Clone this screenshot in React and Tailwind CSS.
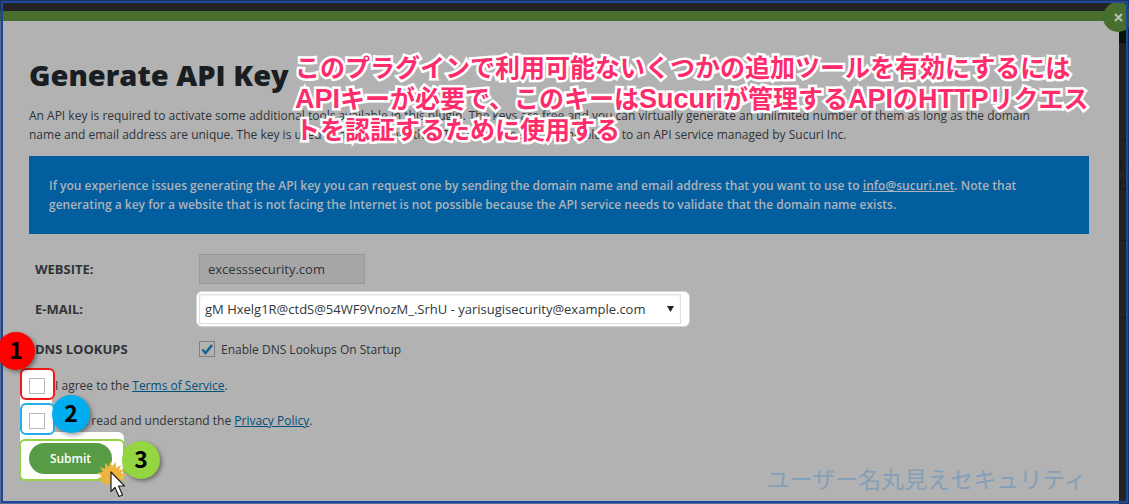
import clsx from "clsx";

const emails = [
  "gM Hxelg1R@ctdS@54WF9VnozM_.SrhU - yarisugisecurity@example.com",
];

function StepBadge({ number, className }) {
  return (
    <span
      className={clsx(
        "absolute z-30 flex size-[38px] items-center justify-center rounded-full pb-1 font-['Noto_Sans_CJK_JP',sans-serif] text-[23px] font-bold leading-none text-black shadow-[2px_2px_4px_rgba(0,0,0,0.4)]",
        className
      )}
    >
      {number}
    </span>
  );
}

function AgreementRow({ id, text, link, frame, children }) {
  return (
    <div className="relative flex h-[35px] items-center">
      <span
        className={clsx(
          "absolute -left-[9px] top-0 z-10 h-8 w-[35px] rounded-md border-2 bg-white",
          frame
        )}
      />
      <input
        id={id}
        type="checkbox"
        className="z-20 size-4 appearance-none border border-[#b4b9be] bg-white"
      />
      <label htmlFor={id} className="ml-2.5">
        {text}{" "}
        <a href="#" className="text-[#00507a] underline">
          {link}
        </a>
        .
      </label>
      {children}
    </div>
  );
}

function ClickCursor() {
  return (
    <svg
      className="absolute left-[68px] top-[18px] z-30"
      width="32"
      height="38"
      viewBox="0 0 32 38"
      aria-hidden="true"
    >
      <path
        d="M13 0l2 5 4-4 0 6 5-3-2 5 6-1-4 4 6 2-6 2 4 4-6-1 1 5-5-3-1 5-4-4-3 4-1-5-5 2 2-5-6 0 5-3-5-3 6-1-3-5 5 2 0-6 4 4z"
        fill="#f0b43c"
      />
      <path
        d="M14 11V30.500L18 26.500L22 35.500L25.500 34L21.500 25H27.500z"
        fill="#fff"
        stroke="#222"
        strokeWidth="1.2"
        strokeLinejoin="round"
      />
    </svg>
  );
}

function Latin({ children }) {
  return <span className="text-[27px]">{children}</span>;
}

export default function App() {
  return (
    <div className="relative flex min-h-screen flex-col overflow-hidden bg-[#232323] font-['Open_Sans',sans-serif] text-[12px] leading-[19px] text-[#303336]">
      <div className="h-[11px]" />

      <div className="flex flex-1">
        <main className="flex-1 border-t-10 border-[#476e2d] bg-[#b2b2b2] pl-[29px] pr-[30px] pt-9">
          <h1 className="text-[29px] font-extrabold leading-9 text-[#191e23]">
            Generate API Key
          </h1>

          <p className="mt-[13px]">
            An API key is required to activate some additional tools available
            in this plugin. The keys are free and you can virtually generate an
            unlimited number of them as long as the domain
            <br />
            name and email address are unique. The key is used to authenticate
            the HTTP requests sent by the plugin to an API service managed by
            Sucuri Inc.
          </p>

          <div className="mt-3 bg-[#035e9f] p-5 font-semibold text-[#adb3b9]">
            If you experience issues generating the API key you can request one
            by sending the domain name and email address that you want to use to{" "}
            <a href="mailto:info@sucuri.net" className="underline">
              info@sucuri.net
            </a>
            . Note that
            <br />
            generating a key for a website that is not facing the Internet is
            not possible because the API service needs to validate that the
            domain name exists.
          </div>

          <form onSubmit={(e) => e.preventDefault()}>
            <div className="mt-5 grid grid-cols-[164px_1fr] items-center gap-y-2.5 pl-1.5">
              <label htmlFor="website" className="text-[13px] font-bold">
                WEBSITE:
              </label>
              <input
                id="website"
                readOnly
                defaultValue="excesssecurity.com"
                className="h-[30px] w-[166px] border border-[#999] bg-[#a6a6a6] px-2 text-[13px]"
              />

              <label htmlFor="email" className="text-[13px] font-bold">
                E-MAIL:
              </label>
              <div className="relative flex h-[30px]">
                <span className="absolute -left-[3px] -top-[3px] h-9 w-[494px] rounded-md border border-[#d5d5d5] bg-white" />
                <select
                  id="email"
                  className="relative w-[482px] appearance-none border border-[#ddd] bg-white pl-[5px] text-[13px] text-[#32373c] shadow-[inset_0_1px_2px_rgba(0,0,0,0.07)]"
                >
                  {emails.map((email) => (
                    <option key={email}>{email}</option>
                  ))}
                </select>
                <svg
                  className="pointer-events-none relative -left-3.5 top-3"
                  width="7"
                  height="6"
                  viewBox="0 0 7 6"
                  aria-hidden="true"
                >
                  <path d="M0 0h7L3.500 6z" fill="#222" />
                </svg>
              </div>

              <span className="text-[13px] font-bold">DNS LOOKUPS</span>
              <div className="flex h-[30px] items-center">
                <span className="relative flex">
                  <input
                    id="dns"
                    type="checkbox"
                    defaultChecked
                    className="size-4 appearance-none border border-[#7d8184] bg-[#b2b2b2]"
                  />
                  <svg
                    className="pointer-events-none absolute inset-0"
                    width="16"
                    height="16"
                    viewBox="0 0 16 16"
                    aria-hidden="true"
                  >
                    <path
                      d="M3.500 8.500l3 3.500L13 4"
                      fill="none"
                      stroke="#15638b"
                      strokeWidth="2.500"
                    />
                  </svg>
                </span>
                <label htmlFor="dns" className="ml-1.5">
                  Enable DNS Lookups On Startup
                </label>
              </div>
            </div>

            <div className="relative mt-1">
              <span className="absolute -left-[9px] top-5 h-14 w-8 bg-white" />
              <AgreementRow
                id="terms"
                text="I agree to the"
                link="Terms of Service"
                frame="border-[#f01818]"
              >
                <StepBadge
                  number="1"
                  className="-left-8 -top-9 bg-[#fe0000]"
                />
              </AgreementRow>
              <AgreementRow
                id="privacy"
                text="I have read and understand the"
                link="Privacy Policy"
                frame="border-[#22aee8]"
              >
                <StepBadge
                  number="2"
                  className="-top-2 left-[23px] bg-[#00adee]"
                />
              </AgreementRow>
            </div>

            <div className="relative mt-[5px] flex pb-[29px]">
              <span className="absolute -left-[9px] -top-[11px] h-12 w-[104px] rounded-md bg-white" />
              <span className="absolute -left-[10px] -top-1 h-[42px] w-[106px] rounded-md border-2 border-[#96d044] bg-white" />
              <button
                type="submit"
                className="relative h-[31px] w-[83px] rounded-full bg-[#589b45] font-semibold text-white"
              >
                Submit
              </button>
              <StepBadge
                number="3"
                className="-top-0.5 left-[93px] bg-[#94d541]"
              />
              <ClickCursor />
            </div>
          </form>
        </main>

        {/* strip of the dimmed page behind the dialog */}
        <aside className="flex w-2.5 flex-col overflow-hidden whitespace-nowrap text-[#0c1612]">
          <div className="h-8 bg-[#061408]" />
          <div className="h-[98px] border-b border-[#181818]" />
          <div className="h-[100px] border-b border-[#181818] pt-3.5">
            t r
            <br />
            <a href="#" className="underline">
              rs
            </a>
          </div>
          <div className="h-[77px] border-b border-[#181818]" />
        </aside>
      </div>

      <button
        type="button"
        aria-label="Close"
        className="absolute -right-1 top-0.5 flex size-[30px] items-center justify-center rounded-full bg-[#476e2d]"
      >
        <svg width="9" height="9" viewBox="0 0 9 9" aria-hidden="true">
          <path
            d="M1 1l7 7M8 1L1 8"
            stroke="#b8bdb4"
            strokeWidth="2.200"
          />
        </svg>
      </button>

      <p className="absolute left-[295px] right-5 top-[53px] z-40 font-['Liberation_Sans','Noto_Sans_CJK_JP',sans-serif] text-[25px] font-bold leading-[31px] text-[#ff2c6c] [-webkit-text-stroke:5px_white] [paint-order:stroke_fill]">
        このプラグインで利用可能ないくつかの追加ツールを有効にするには
        <br />
        <Latin>API</Latin>キーが必要で、このキーは<Latin>Sucuri</Latin>
        が管理する<Latin>API</Latin>の<Latin>HTTP</Latin>リクエス
        <br />
        トを認証するために使用する
      </p>

      <p className="absolute bottom-2.5 right-[42px] font-['Noto_Sans_CJK_JP',sans-serif] text-[23px] leading-8 text-[#849fb8]">
        ユーザー名丸見えセキュリティ
      </p>

      <div className="pointer-events-none absolute inset-0 border border-[#1d3c7c]/60" />
      <div className="pointer-events-none absolute inset-px border-2 border-[#21469a]" />
    </div>
  );
}
